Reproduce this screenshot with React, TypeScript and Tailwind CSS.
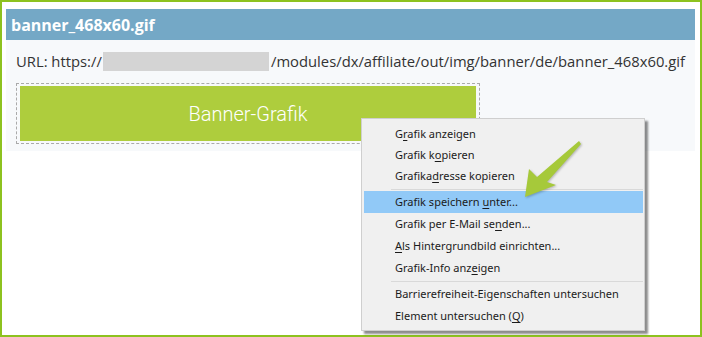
import React from 'react';

type Item = { pre: string; key?: string; post?: string; active?: boolean };

const groups: Item[][] = [
  [
    { pre: 'G', key: 'r', post: 'afik anzeigen' },
    { pre: 'Grafik k', key: 'o', post: 'pieren' },
    { pre: 'Grafika', key: 'd', post: 'resse kopieren' },
  ],
  [
    { pre: 'Grafik speichern ', key: 'u', post: 'nter...', active: true },
    { pre: 'Grafik per E-Mail se', key: 'n', post: 'den...' },
    { pre: '', key: 'A', post: 'ls Hintergrundbild einrichten...' },
    { pre: 'Grafik-Info anz', key: 'e', post: 'igen' },
  ],
  [
    { pre: 'Barrierefreiheit-Eigenschaften untersuchen' },
    { pre: 'Element untersuchen (', key: 'Q', post: ')' },
  ],
];

const ContextMenu = () => (
  <div className="absolute left-[359px] top-[116px] w-[284px] bg-[#f0f0f0] border border-[#cfcfcf] pl-[2px] pr-[1px] pt-[5px] pb-[3px] shadow-[3px_3px_2px_rgba(0,0,0,0.45)] font-['Noto_Sans',sans-serif] text-[11px] text-[#1b1b1b]">
    {groups.map((g, gi) => (
      <div key={gi}>
        {gi > 0 && (
          <div className="h-[4px] flex items-center pl-[27px]">
            <div className="w-full h-px bg-[#d9d9d9]" />
          </div>
        )}
        {g.map((it, i) => (
          <div
            key={i}
            className={`${gi === 0 ? 'h-[21px]' : 'h-[22px]'} flex items-center pl-[31px] ${it.active ? 'bg-[#91c9f7]' : ''}`}
          >
            <span>
              {it.pre}
              {it.key && <span className="underline underline-offset-2">{it.key}</span>}
              {it.post}
            </span>
          </div>
        ))}
      </div>
    ))}
  </div>
);

const Arrow = () => (
  <svg
    className="absolute left-[500px] top-[130px] drop-shadow-[1px_1px_1px_rgba(0,0,0,0.25)]"
    width="90"
    height="75"
    viewBox="500 130 90 75"
  >
    <polygon
      points="577,139 535,175 527,167 523,195 554,183 545,180 579,142"
      fill="#a6c93a"
    />
  </svg>
);

export default function App() {
  return (
    <div className="relative w-[702px] h-[337px] bg-white border-2 border-[#8dc21f] pt-[7px] pl-[4px] pr-[5px]">
      <div className="h-[31px] bg-[#74a8c6] px-[5px] flex items-center text-white font-bold text-[16px] font-['Open_Sans',sans-serif]">
        banner_468x60.gif
      </div>
      <div className="h-[111px] bg-[#f7f9fb] px-[10px] pt-[11px] font-['Open_Sans',sans-serif] text-[#333]">
        <div className="h-[20px] flex items-center text-[14.8px] whitespace-nowrap">
          <span>URL: https://</span>
          <span className="inline-block w-[168px] h-[19px] bg-[#d4d4d4] ml-[1px] mr-[2px]" />
          <span>/modules/dx/affiliate/out/img/banner/de/banner_468x60.gif</span>
        </div>
        <div className="mt-[12px] w-[464px] border border-dashed border-[#aaaaaa] px-[3px] py-[2px]">
          <div className="h-[55px] bg-[#aecd3d] flex items-center justify-center text-white text-[20px] font-light font-['Roboto',sans-serif]">
            Banner-Grafik
          </div>
        </div>
      </div>
      <ContextMenu />
      <Arrow />
    </div>
  );
}
